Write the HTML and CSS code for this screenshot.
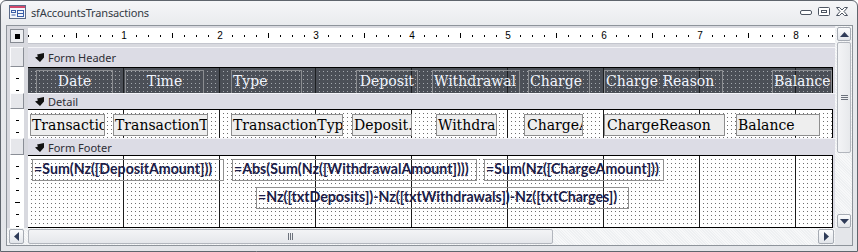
FILE: index.html
```html
<!DOCTYPE html>
<html>
<head>
<meta charset="utf-8">
<link rel="stylesheet" href="styles.css">
</head>
<body>
<div class="window">
  <div class="titlebar">
    <svg class="appicon" width="17" height="14" viewBox="0 0 17 14">
      <rect x="0.5" y="0.5" width="16" height="13" fill="#f4f6fa" stroke="#5a6a88"/>
      <rect x="1" y="1" width="15" height="2" fill="#d2486a"/>
      <rect x="2.5" y="5.5" width="4" height="2" fill="none" stroke="#3b5fa8"/>
      <rect x="2.5" y="9.5" width="4" height="1" fill="#3b5fa8"/>
      <rect x="8.5" y="5.5" width="6" height="6" fill="none" stroke="#3b5fa8"/>
      <rect x="9" y="8" width="5" height="1" fill="#3b5fa8"/>
    </svg>
    <span class="title">sfAccountsTransactions</span>
    <div class="controls">
      <svg width="12" height="9" viewBox="0 0 12 9"><rect x="0.5" y="3.5" width="11" height="4" rx="1.5" fill="#fff" stroke="#4d5562"/></svg>
      <svg width="12" height="9" viewBox="0 0 12 9"><rect x="0.5" y="0.5" width="11" height="8" rx="1" fill="#fff" stroke="#4d5562"/><rect x="3.5" y="3.5" width="5" height="2" fill="none" stroke="#4d5562"/></svg>
      <svg width="12" height="9" viewBox="0 0 12 9"><path d="M0.5 0.5 H3.5 L6 3 L8.5 0.5 H11.5 L8 4.5 L11.5 8.5 H8.5 L6 6 L3.5 8.5 H0.5 L4 4.5 Z" fill="#fff" stroke="#4d5562" stroke-linejoin="round"/></svg>
    </div>
  </div>
  <div class="client">
    <div class="design">
      <div class="row r-ruler">
        <div class="lcell"><div class="corner"><span class="sq"></span></div></div>
        <div class="hruler">
          <span class="inch"><span>1</span></span>
          <span class="inch"><span>2</span></span>
          <span class="inch"><span>3</span></span>
          <span class="inch"><span>4</span></span>
          <span class="inch"><span>5</span></span>
          <span class="inch"><span>6</span></span>
          <span class="inch"><span>7</span></span>
          <span class="inch"><span>8</span></span>
        </div>
      </div>

      <div class="row r-bar bar-h">
        <div class="lcell"><div class="btn"></div></div>
        <div class="bar"><svg class="secicon" width="10" height="9" viewBox="0 0 10 9"><path d="M2 1.5 L9 0 L9 4.5 L5 9 L0 4.5 L3 3.5 Z" fill="#111"/></svg>Form Header</div>
      </div>
      <div class="row r-sec sec-h">
        <div class="lcell"><div class="vruler"></div></div>
        <div class="main">
          <div class="surface dark">
            <div class="lbl c-date">Date</div>
            <div class="lbl c-time">Time</div>
            <div class="lbl c-type">Type</div>
            <div class="lbl c-dep">Deposit</div>
            <div class="lbl c-wd">Withdrawal</div>
            <div class="lbl c-chg">Charge</div>
            <div class="lbl c-reason">Charge Reason</div>
            <div class="lbl c-bal">Balance</div>
          </div>
        </div>
      </div>

      <div class="row r-bar bar-d">
        <div class="lcell"><div class="btn"></div></div>
        <div class="bar"><svg class="secicon" width="10" height="9" viewBox="0 0 10 9"><path d="M2 1.5 L9 0 L9 4.5 L5 9 L0 4.5 L3 3.5 Z" fill="#111"/></svg>Detail</div>
      </div>
      <div class="row r-sec sec-d">
        <div class="lcell"><div class="vruler"></div></div>
        <div class="main">
          <div class="surface light">
            <div class="txt t-date">Transactic</div>
            <div class="txt t-time">TransactionT</div>
            <div class="txt t-type">TransactionTyp</div>
            <div class="txt t-dep">Deposit.</div>
            <div class="txt t-wd">Withdra</div>
            <div class="txt t-chg">ChargeA</div>
            <div class="txt t-reason">ChargeReason</div>
            <div class="txt t-bal">Balance</div>
          </div>
        </div>
      </div>

      <div class="row r-bar bar-f">
        <div class="lcell"><div class="btn"></div></div>
        <div class="bar"><svg class="secicon" width="10" height="9" viewBox="0 0 10 9"><path d="M2 1.5 L9 0 L9 4.5 L5 9 L0 4.5 L3 3.5 Z" fill="#111"/></svg>Form Footer</div>
      </div>
      <div class="row r-sec sec-f">
        <div class="lcell"><div class="vruler"></div></div>
        <div class="main">
          <div class="surface light">
            <div class="calc f-dep">=Sum(Nz([DepositAmount]))</div>
            <div class="calc f-wd">=Abs(Sum(Nz([WithdrawalAmount])))</div>
            <div class="calc f-chg">=Sum(Nz([ChargeAmount]))</div>
            <div class="calc f-bal">=Nz([txtDeposits])-Nz([txtWithdrawals])-Nz([txtCharges])</div>
          </div>
        </div>
      </div>
    </div>

    <div class="vscroll">
      <div class="sbtn vbtn"><svg width="9" height="5" viewBox="0 0 9 5"><path d="M0 5 L4.5 0 L9 5 Z" fill="#2e3b58"/></svg></div>
      <div class="vthumb"><span class="grip-h"></span><span class="grip-h"></span><span class="grip-h"></span></div>
      <div class="vtrack"></div>
      <div class="sbtn vbtn"><svg width="9" height="5" viewBox="0 0 9 5"><path d="M0 0 L9 0 L4.5 5 Z" fill="#2e3b58"/></svg></div>
    </div>

    <div class="hscroll">
      <div class="sbtn hbtn"><svg width="5" height="9" viewBox="0 0 5 9"><path d="M5 0 L5 9 L0 4.5 Z" fill="#2e3b58"/></svg></div>
      <div class="hthumb"><span class="grip-v"></span><span class="grip-v"></span><span class="grip-v"></span></div>
      <div class="htrack"></div>
      <div class="sbtn hbtn"><svg width="5" height="9" viewBox="0 0 5 9"><path d="M0 0 L5 4.5 L0 9 Z" fill="#2e3b58"/></svg></div>
    </div>
    <div class="sizer"></div>
  </div>
</div>
</body>
</html>
```

FILE: styles.css
```css
* { box-sizing: border-box; }

body {
  margin: 0;
  background: #ffffff;
  font-family: "Noto Sans", "DejaVu Sans", sans-serif;
}

.window {
  width: 858px;
  height: 252px;
  border: 1px solid #5f656d;
  border-radius: 6px 6px 0 0;
  background: linear-gradient(#f5f6f8, #e9ebee 24px, #e3e5e9);
  padding: 0 4px 5px 5px;
  display: flex;
  flex-direction: column;
}

/* ---------- title bar ---------- */
.titlebar {
  height: 24px;
  display: flex;
  align-items: center;
  padding-left: 3px;
  padding-right: 5px;
}
.appicon { display: block; margin-top: -2px; }
.title {
  margin-left: 5px;
  font-size: 11px;
  letter-spacing: -0.15px;
  color: #333a44;
  margin-top: -1px;
}
.controls {
  margin-left: auto;
  display: flex;
  gap: 6px;
  margin-top: -4px;
}
.controls svg { display: block; }

/* ---------- client ---------- */
.client {
  border: 1px solid #8e949b;
  display: grid;
  grid-template-columns: 828px 17px;
  grid-template-rows: 202px 17px;
  background: #dcdde3;
}

.design {
  display: flex;
  flex-direction: column;
  background: #d8d9df;
}

.row {
  display: grid;
  grid-template-columns: 21px 807px;
}

.lcell { background: #d8d9df; }

/* ruler row */
.r-ruler { height: 21px; }
.corner {
  margin: 3px 0 0 3px;
  width: 14px;
  height: 14px;
  border: 1px solid #868a92;
  background: #eeeff2;
  display: flex;
  align-items: center;
  justify-content: center;
}
.sq { width: 5px; height: 5px; background: #000; }

.hruler {
  margin-top: 2px;
  height: 16px;
  background-color: #ffffff;
  border-bottom: 1px solid #c4c6ce;
  background-image:
    linear-gradient(to right, #000 1px, transparent 1px),
    linear-gradient(to right, #000 1px, transparent 1px);
  background-size: 12px 2px, 96px 5px;
  background-position: 0 7px, 48px 5px;
  background-repeat: repeat-x;
  padding-left: 48px;
  display: flex;
  overflow: hidden;
}
.inch {
  flex: 0 0 96px;
  text-align: center;
  font-family: "Liberation Sans", sans-serif;
  font-size: 10px;
  line-height: 15px;
  color: #000;
}
.inch span { background: #fff; padding: 0 1px; }

/* section bars */
.bar-h { height: 20px; }
.bar-d { height: 16px; }
.bar-f { height: 17px; }

.btn {
  margin-left: 3px;
  width: 14px;
  height: 100%;
  border: 1px solid;
  border-color: #fbfbfd #8a8e96 #8a8e96 #fbfbfd;
  background: #e6e7eb;
}

.bar {
  background: #dcdce5;
  border-top: 1px solid #f4f4f8;
  display: flex;
  align-items: center;
  padding-left: 7px;
  gap: 3px;
  font-size: 11px;
  color: #2e2e36;
}
.secicon { display: block; }

/* section bodies */
.sec-h { height: 26px; }
.sec-d { height: 29px; }
.sec-f { height: 73px; }

.vruler {
  margin-left: 3px;
  width: 14px;
  height: 100%;
  background-color: #ffffff;
  background-image:
    linear-gradient(to bottom, transparent 11px, #000 11px),
    linear-gradient(to bottom, transparent 47px, #000 47px);
  background-size: 3px 12px, 5px 48px;
  background-position: 6px 0, 5px 0;
  background-repeat: repeat-y;
}

.main { background: #dcdce5; }

.surface {
  position: relative;
  width: 805px;
  height: 100%;
  overflow: hidden;
  border-top: 1px solid #000;
  border-right: 1px solid #000;
  background-size: 96px 100%, 4px 4px, 4px 4px;
  background-position: 0 0, 0 0, 0 0;
}
.surface.dark {
  background-color: #a4a8ae;
  background-image:
    linear-gradient(to right, transparent 95px, #1d1f22 95px, #1d1f22 96px, transparent 96px),
    linear-gradient(to right, #4b4f57 3px, transparent 3px),
    linear-gradient(to bottom, #4b4f57 3px, transparent 3px);
}
.surface.light {
  background-color: #6e6e6e;
  background-image:
    linear-gradient(to right, transparent 95px, #1a1a1a 95px, #1a1a1a 96px, transparent 96px),
    linear-gradient(to right, #ffffff 3px, transparent 3px),
    linear-gradient(to bottom, #ffffff 3px, transparent 3px);
}
.sec-f .surface { border-bottom: 1px solid #000; }

/* header labels */
.lbl {
  position: absolute;
  top: 2px;
  height: 24px;
  border: 1px solid #8b8d91;
  font-family: "DejaVu Serif", serif;
  font-size: 14px;
  line-height: 20px;
  color: #f0f4fc;
  white-space: nowrap;
  overflow: hidden;
  padding: 0 1px;
}
.c-date   { left: 8px;   width: 77px; text-align: center; }
.c-time   { left: 97px;  width: 79px; text-align: center; }
.c-type   { left: 203px; width: 71px; }
.c-dep    { left: 328px; width: 62px; text-align: right; padding-right: 3px; }
.c-wd     { left: 404px; width: 88px; }
.c-chg    { left: 500px; width: 62px; }
.c-reason { left: 576px; width: 119px; }
.c-bal    { left: 744px; width: 60px; text-align: right; padding-right: 2px; }

/* detail text boxes */
.txt {
  position: absolute;
  top: 4px;
  height: 22px;
  border: 1px solid #8e8e8e;
  background: #eeeeee;
  font-family: "DejaVu Serif", serif;
  font-size: 14px;
  line-height: 20px;
  color: #000;
  white-space: nowrap;
  overflow: hidden;
  padding-left: 1px;
}
.t-date   { left: 2px;   width: 75px; }
.t-time   { left: 85px;  width: 95px; }
.t-type   { left: 203px; width: 112px; }
.t-dep    { left: 324px; width: 60px; }
.t-wd     { left: 408px; width: 61px; }
.t-chg    { left: 496px; width: 59px; padding-left: 2px; }
.t-reason { left: 576px; width: 121px; padding-left: 2px; }
.t-bal    { left: 708px; width: 84px; }

/* footer calculated boxes */
.calc {
  position: absolute;
  height: 22px;
  border: 1px solid #8e8e8e;
  font-family: "Lato", "Open Sans", sans-serif;
  font-weight: 700;
  font-size: 14.2px;
  line-height: 18px;
  color: #1c1c48;
  white-space: nowrap;
  overflow: hidden;
  padding-left: 1px;
}
.f-dep { top: 3px;  left: 4px;   width: 192px; }
.f-wd  { top: 3px;  left: 204px; width: 245px; }
.f-chg { top: 3px;  left: 456px; width: 180px; }
.f-bal { top: 31px; left: 228px; width: 373px; }

/* ---------- scrollbars ---------- */
.sbtn {
  border: 1px solid #a6abb3;
  border-radius: 2px;
  background: linear-gradient(#fbfcfd, #e2e5ea);
  display: flex;
  align-items: center;
  justify-content: center;
}
.sbtn svg { display: block; }

.vscroll {
  grid-column: 2;
  grid-row: 1;
  display: flex;
  flex-direction: column;
  gap: 1px;
  padding: 1px 1px 0 2px;
  background: repeating-linear-gradient(45deg, #eef0f2 0 1px, #f7f8f9 1px 2px);
}
.vbtn { height: 14px; flex: 0 0 14px; }
.vthumb {
  flex: 0 0 111px;
  border: 1px solid #b2b6bd;
  border-radius: 2px;
  background: linear-gradient(to right, #f3f4f6, #e7e9ec);
  display: flex;
  flex-direction: column;
  align-items: center;
  justify-content: center;
  gap: 1px;
}
.grip-h { width: 7px; height: 1px; background: #6c727c; }
.vtrack { flex: 1; }

.hscroll {
  grid-column: 1;
  grid-row: 2;
  display: flex;
  gap: 4px;
  padding: 1px 1px 1px 2px;
  background: repeating-linear-gradient(45deg, #eef0f2 0 1px, #f7f8f9 1px 2px);
}
.hbtn { width: 15px; flex: 0 0 15px; }
.hscroll .hbtn:last-child { flex-basis: 16px; }
.hthumb {
  flex: 0 0 525px;
  border: 1px solid #b2b6bd;
  border-radius: 2px;
  background: linear-gradient(#f3f4f6, #e5e7eb);
  display: flex;
  align-items: center;
  justify-content: center;
  gap: 1px;
}
.grip-v { width: 1px; height: 7px; background: #6c727c; }
.htrack { flex: 1; }

.sizer {
  grid-column: 2;
  grid-row: 2;
  background: #e4e6ea;
}
```
